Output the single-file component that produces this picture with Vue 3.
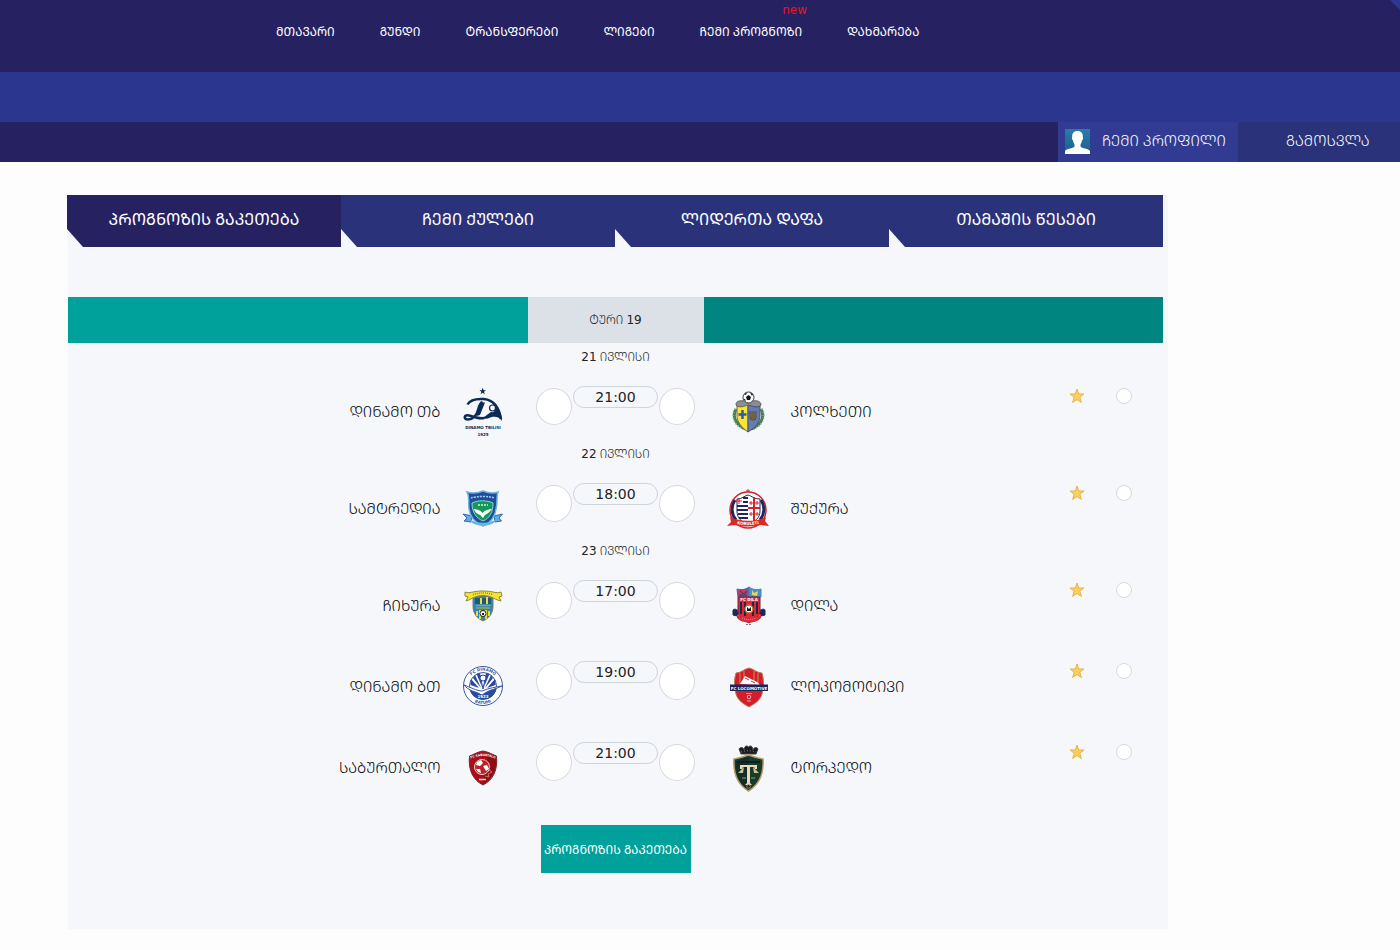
<template>
    <div class="page">
        <header>
            <nav class="main-nav">
                <a v-for="item in menu" :key="item.title" href="#">
                    {{ item.title }}
                    <sup v-if="item.isNew" class="new-badge">new</sup>
                </a>
                <svg class="corner" viewBox="0 0 10 10"><path d="M0 0H10V10Z" fill="#2b3990" /></svg>
            </nav>
            <div class="band"></div>
            <div class="user-bar">
                <a href="#" class="profile">
                    <svg class="avatar" viewBox="0 0 25 25">
                        <defs>
                            <linearGradient id="avatarBg" x1="0" y1="0" x2="0" y2="1">
                                <stop offset="0" stop-color="#2a7bab" />
                                <stop offset="1" stop-color="#1c5f8a" />
                            </linearGradient>
                        </defs>
                        <rect width="25" height="25" fill="url(#avatarBg)" />
                        <path d="M12.5 2C8.500 2 7 4.500 7.200 8C6.600 8.500 7 11 8 11.500C8.300 13.500 9.200 14.500 9.500 15.500V17.500C8 19.500 1.500 19.500 0 22V25H25V22C23.500 19.500 17 19.500 15.500 17.500V15.500C16 14.500 16.700 13.500 17 11.500C18 11 18.400 8.500 17.800 8C18 4.500 16.500 2 12.500 2Z" fill="#fff" />
                    </svg>
                    ჩემი პროფილი
                </a>
                <a href="#" class="logout">გამოსვლა</a>
            </div>
        </header>

        <main class="panel">
            <nav class="tabs">
                <a v-for="(tab, index) in tabs" :key="tab" href="#" :class="{ active: index === activeTab }"
                    @click.prevent="activeTab = index">{{ tab }}</a>
            </nav>

            <form class="games" @submit.prevent>
                <div class="round">
                    <div class="round-home"></div>
                    <div class="round-title">ტური <span class="num">19</span></div>
                    <div class="round-away"></div>
                </div>

                <section v-for="day in days" :key="day.date">
                    <div class="date"><span class="num">{{ day.date }}</span> ივლისი</div>
                    <div v-for="game in day.games" :key="game.home" class="game">
                        <div class="home">
                            <span>{{ game.home }}</span>
                            <!-- Dinamo Tbilisi -->
                            <svg v-if="game.logo === 'dinamo'" class="logo" viewBox="0 0 50 50">
                                <path d="M24.700 1.800L25.600 4.200H28L26 5.700L26.800 8.200L24.700 6.700L22.600 8.200L23.400 5.700L21.400 4.200H23.800Z" fill="#0c2a56" />
                                <path d="M9.500 18.500C12 14 19 12.500 26 13C35 14 41 21 43 33" fill="none" stroke="#0c2a56" stroke-width="2.500" />
                                <path d="M34 17C41 21 43.500 27 44 35C41 30 35 29.500 30 32.500L20 33.500C26 32 30 28 33 26C38 27 39 22 34 17Z" fill="#0c2a56" />
                                <circle cx="34.500" cy="22" r="3" fill="#f5f7fb" stroke="#0c2a56" stroke-width="1.200" />
                                <path d="M24.500 16C22 17 21 20 20 24C19 29 15 33.500 10 33.500C5 33.500 6 28.500 11 29.500C16 30.500 20 33 26 32" fill="none" stroke="#0c2a56" stroke-width="2.500" />
                                <path d="M22 16.500H27L22 29L18.500 30Z" fill="#0c2a56" />
                                <text x="25" y="43" class="crest-text navy">DINAMO TBILISI</text>
                                <text x="25" y="50" class="crest-text navy">1925</text>
                            </svg>
                            <!-- Samtredia -->
                            <svg v-else-if="game.logo === 'samtredia'" class="logo" viewBox="0 0 50 50">
                                <path d="M5 31L14 33L13 39L6 38L9 35ZM44.500 31L36 33L37 39L43.500 38L41 35Z" fill="#65a9e0" stroke="#2b6fb0" stroke-width="1" />
                                <path d="M9 9C15 11 20 10 25 8C30 10 35 11 40 9C38 14 40 18 38 26C37 34 32 40 25 43C18 40 12 34 11 26C10 18 12 14 9 9Z" fill="#1d4e97" stroke="#6fb2e4" stroke-width="1.500" />
                                <path d="M13 15C18 13 32 13 36 15" fill="none" stroke="#a4cdec" stroke-width="1.500" stroke-dasharray="2 1" />
                                <path d="M14 20C20 17 29 17 35 20C35 29 32 35 25 38C18 35 14 29 14 20Z" fill="#16975a" stroke="#8ed3d8" stroke-width="1" />
                                <path d="M15.500 26C19 26 22 27 24.500 30C27 27 31 26 34 26C32 29 29 31 27 32L25 35L22 32C19 31 17 29 15.500 26Z" fill="#fff" />
                                <path d="M20 22H30" stroke="#d4f0df" stroke-width="1.500" stroke-dasharray="2 1" />
                                <path d="M12 36C18 41 32 41 38 36L37 39C31 44 19 44 13 39Z" fill="#67b4e6" />
                            </svg>
                            <!-- Chikhura -->
                            <svg v-else-if="game.logo === 'chikhura'" class="logo" viewBox="0 0 50 50">
                                <path d="M15 16H35V26C35 34 31 38 25 41C19 38 15 34 15 26Z" fill="#2c83c4" stroke="#807f52" stroke-width="1" />
                                <path d="M17 18H33V24H17Z" fill="#23577a" />
                                <path d="M23 18V24M29 17V24" stroke="#f2dc37" stroke-width="2" />
                                <path d="M18 25.500H33M18 28H32" stroke="#96a747" stroke-width="1.500" />
                                <path d="M19 31V36M22 30V39M28 30V39M31 31V36" stroke="#e9d83b" stroke-width="2" />
                                <circle cx="25" cy="33.500" r="3" fill="#fff" stroke="#222" stroke-width="1" />
                                <path d="M24 33H26V35H24Z" fill="#222" />
                                <path d="M7 12C12 14 14 11 25 11S38 14 43 12L44 16L41 17L43 21C38 20 36 18 33 17C28 15 22 15 17 17C14 18 12 20 8 21L10 17L7 16Z" fill="#f6e431" stroke="#8d8738" stroke-width="1" />
                                <path d="M15 14.500C21 12.500 29 12.500 35 14.500" fill="none" stroke="#8b8b42" stroke-width="1.500" stroke-dasharray="1 1" />
                            </svg>
                            <!-- Dinamo Batumi -->
                            <svg v-else-if="game.logo === 'batumi'" class="logo" viewBox="0 0 50 50">
                                <circle cx="25" cy="25" r="19.500" fill="#fff" stroke="#3b56a0" stroke-width="1" />
                                <circle cx="25" cy="25" r="13.500" fill="#fff" stroke="#3b56a0" stroke-width="1" />
                                <path d="M12 29C17 30 21 31 24 33L28 30C31 28 35 27 38.500 26C38 34 32 38.500 25 38.500C18 38.500 13 34 12 29Z" fill="#294a9e" />
                                <path d="M13 18L21 27L12.500 24ZM17 14L23 27L15 17ZM22 12L24 26L18.500 13ZM28 12L26 26L31.500 13ZM33 14L27 27L35 17ZM37 18L29 27L37.500 24Z" fill="#294a9e" />
                                <path d="M22 14L25 28L28 14" fill="none" stroke="#294a9e" stroke-width="1" />
                                <circle cx="25" cy="17" r="3" fill="#fff" stroke="#294a9e" stroke-width="1" />
                                <path d="M6 24C12 26 19 30 24 30C31 27 38 26 44 25C38 28 31 29 27 32L24 34L20 32C15 30 10 29 6 24Z" fill="#fff" stroke="#3b56a0" stroke-width="1" />
                                <path id="batumiTop" d="M10 20A16 16 0 0 1 40 20" fill="none" />
                                <path id="batumiBottom" d="M10 35A18 18 0 0 0 40 35" fill="none" />
                                <text class="crest-text blue"><textPath href="#batumiTop" startOffset="50%">FC DINAMO</textPath></text>
                                <text class="crest-text blue"><textPath href="#batumiBottom" startOffset="50%">BATUMI</textPath></text>
                                <text x="25" y="37" class="crest-text white">1923</text>
                            </svg>
                            <!-- Saburtalo -->
                            <svg v-else class="logo" viewBox="0 0 50 50">
                                <path d="M11.500 14C17 12 19 10 25 9C31 10 33 12 38.500 14C40 28 35 38 25 43C15 38 10 28 11.500 14Z" fill="#a90f18" stroke="#77272b" stroke-width="1" />
                                <path d="M30 11L38 15C39 28 34 37 25 42Z" fill="#7c0b12" opacity=".6" />
                                <path id="saburtaloTop" d="M10 18Q25 10 40 18" fill="none" />
                                <text class="crest-text small white"><textPath href="#saburtaloTop" startOffset="50%">FC SABURTALO</textPath></text>
                                <circle cx="24" cy="25" r="7.500" fill="#b8232a" stroke="#f1d3d3" stroke-width="1" />
                                <path d="M19 20L23 18L25 21L22 24L18 23ZM25 24L29 23L31 27L28 29ZM18 27L22 27L23 31L20 30Z" fill="#fff" />
                                <path d="M26 18C31 19 33 23 31 28L34 30L30 32L31 35L27 34" fill="none" stroke="#dc6d70" stroke-width="1" />
                                <path d="M21 37.500H28" stroke="#f4dada" stroke-width="1.500" />
                            </svg>
                        </div>
                        <div class="score">
                            <input type="text" v-model="game.homeScore" :aria-label="game.home" maxlength="2">
                            <time>{{ game.time }}</time>
                            <input type="text" v-model="game.awayScore" :aria-label="game.away" maxlength="2">
                        </div>
                        <div class="away">
                            <!-- Kolkheti -->
                            <svg v-if="game.logo === 'dinamo'" class="logo" viewBox="0 0 50 50">
                                <path d="M13 23C9 30 12 39 23 43M38 23C42 30 39 39 28 43" fill="none" stroke="#3f7b53" stroke-width="3" />
                                <path d="M12 23C8 30 11 40 22 44M39 23C43 30 40 40 29 44" fill="none" stroke="#8fb39b" stroke-width="2" stroke-dasharray="1 2" />
                                <path d="M13 19C13 14 19 14 25 16C31 14 38 14 38 19L36 21H15Z" fill="#8b8f92" stroke="#5c6164" stroke-width="1" />
                                <path d="M14 20C18 22 21 20 25 19V46C18 41 14 36 14 29Z" fill="#f8e534" stroke="#6b6b3c" stroke-width="1" />
                                <path d="M25 19C29 20 33 22 37 20V29C37 36 33 41 25 46Z" fill="#657bbb" stroke="#4e5265" stroke-width="1" />
                                <path d="M19.500 24V33M15.500 28.500H23.500" stroke="#315aa8" stroke-width="2.500" />
                                <path d="M27 25V31C27 35 33 35 33 31V25M29 25V33M31 25V33" fill="none" stroke="#6a5d31" stroke-width="1.500" />
                                <circle cx="25.500" cy="11.500" r="5.500" fill="#fff" stroke="#333" stroke-width="1" />
                                <path d="M25.500 9L28 11L27 14H24L23 11ZM21 8L24 6.500L23 9ZM27 6.500L30 8L29 10ZM20.500 13L22 13L23 16Z" fill="#111" />
                            </svg>
                            <!-- Shukura -->
                            <svg v-else-if="game.logo === 'samtredia'" class="logo" viewBox="0 0 50 50">
                                <path d="M25 6V10M23 8H27" stroke="#d5232a" stroke-width="1" />
                                <circle cx="25" cy="27" r="18" fill="#fff" stroke="#d5232a" stroke-width="1.500" />
                                <path d="M12 17C8 23 8 31 13 37M38 17C42 23 42 31 37 37" fill="none" stroke="#20265e" stroke-width="3" />
                                <path d="M14 16C19 16 21 13 25 12C29 13 31 16 37 16V28C37 35 32 39 25 41C18 39 14 35 14 28Z" fill="#fff" stroke="#20265e" stroke-width="1" />
                                <path d="M14 23H25M14 27H25M15 31H25M16 35H25M20 15H25M20 19H25" stroke="#20265e" stroke-width="2" />
                                <path d="M31 14V38M25 25H37" stroke="#d5232a" stroke-width="2" />
                                <path d="M28 18V22M26 20H30M34 18V22M32 20H36M28 29V33M26 31H30M34 29V33M32 31H36M16 15V21M13 18H19" stroke="#d5232a" stroke-width="1" />
                                <path d="M7 34C17 39 33 39 43 34L42 38L46 43L38 42C29 44 20 44 12 42L4 43L8 39Z" fill="#dc2923" />
                                <path id="shukuraRibbon" d="M10 40Q25 44 40 40" fill="none" />
                                <text class="crest-text white"><textPath href="#shukuraRibbon" startOffset="50%">KOBULETI</textPath></text>
                            </svg>
                            <!-- Dila -->
                            <svg v-else-if="game.logo === 'chikhura'" class="logo" viewBox="0 0 50 50">
                                <path d="M10 30C12 28 14 30 17 32L14 36L10 35ZM42 30C40 28 37 30 35 32L38 36L42 35Z" fill="#1b2958" stroke="#1b2958" stroke-width="1" />
                                <path d="M14 9C18 10 22 10 26 7V17H15Z" fill="#b54369" stroke="#466097" stroke-width="1" />
                                <path d="M26 7C30 10 34 10 38 9V17H26Z" fill="#4295d5" stroke="#5280b5" stroke-width="1" />
                                <path d="M17 11L21 14L24 11M16 15H24" fill="none" stroke="#65396f" stroke-width="1.500" />
                                <path d="M29 10L31 13L35 11L34 16L29 15Z" fill="#ead652" />
                                <path d="M15 17H37V32C35 38 30 41 26 43C22 41 17 38 15 32Z" fill="#df2835" stroke="#6b2540" stroke-width="1" />
                                <path d="M18 22V34M22 22V36M30 22V36M34 22V34" stroke="#202846" stroke-width="2" />
                                <text x="26" y="21" class="crest-text white">FC DILA</text>
                                <circle cx="26" cy="29" r="4" fill="#fff" stroke="#c56934" stroke-width="1.500" />
                                <path d="M24 27L26 29L28 27V31H24Z" fill="#161616" />
                                <path d="M14 34C20 40 32 40 38 34V38C33 44 19 44 14 38Z" fill="#dc2935" />
                                <path d="M19 38Q26 41 33 38" fill="none" stroke="#f2a2a5" stroke-width="1" stroke-dasharray="1 1" />
                                <path d="M23 44.500H29" stroke="#777" stroke-width="1" stroke-dasharray="2 1" />
                            </svg>
                            <!-- Lokomotivi -->
                            <svg v-else-if="game.logo === 'batumi'" class="logo" viewBox="0 0 50 50">
                                <path d="M13 12C18 12 21 8 26 7C31 8 34 12 39 12C41 19 41 25 39 33C37 40 31 43 26 46C21 43 15 40 13 33C11 25 11 19 13 12Z" fill="#d31d2b" stroke="#bd7a54" stroke-width="1" />
                                <path d="M17 12V23M21 10V20M31 10V20M35 12V23" stroke="#d06a48" stroke-width="1.500" />
                                <path d="M17 23L22 15L34 21L37 24Z" fill="#fff" />
                                <path d="M22 17L26 19M28 20L32 22" stroke="#bb3a43" stroke-width="1" />
                                <path d="M7 23.500H45V30H7Z" fill="#1d245c" />
                                <text x="26" y="28.500" class="crest-text white">FC LOCOMOTIVE</text>
                                <circle cx="26" cy="36" r="1.800" fill="none" stroke="#efb4b8" stroke-width="1" />
                                <path d="M23 32.500H29M24 40H28" stroke="#ec9ca2" stroke-width="1" />
                            </svg>
                            <!-- Torpedo -->
                            <svg v-else class="logo" viewBox="0 0 50 50">
                                <path d="M18 12L16 7C18 4 21 6 21 8C21 4 24 3 25.500 5C27 3 30 4 30 8C31 5 34 5 35 7L33 12Z" fill="#1a1c25" stroke="#4a412f" stroke-width="1" />
                                <path d="M18 10Q25.500 7.500 33 10" fill="none" stroke="#a58a58" stroke-width="1" stroke-dasharray="1 2" />
                                <path d="M11 17C17 16 20 15 25.500 13C31 15 34 16 40 17C41 32 37 42 25.500 49C14 42 10 32 11 17Z" fill="#153d29" stroke="#b99b6c" stroke-width="1.500" />
                                <path d="M25.500 15V48C16 42 13 34 13 19Z" fill="#0d1d28" opacity=".5" />
                                <path d="M14 20H37" stroke="#131b2a" stroke-width="2" />
                                <path d="M17 23H34V27H32L31 25H27V41L29 43H22L24 41V25H20L19 27H17Z" fill="#ead9b4" />
                                <path d="M15 31L21 25L20 31ZM36 31L30 25L31 31Z" fill="#d9bd86" />
                                <path d="M19 36H23M28 36H32" stroke="#8a9f82" stroke-width="1" />
                                <circle cx="25.500" cy="44.500" r="1.800" fill="#1a2127" stroke="#8f8364" stroke-width="1" />
                            </svg>
                            <span>{{ game.away }}</span>
                            <svg class="star" viewBox="0 0 16 16">
                                <path d="M8 1L9.700 6H15L10.800 9.200L12.400 14.500L8 11.500L3.600 14.500L5.200 9.200L1 6H6.300Z" fill="#fccf5c" stroke="#e5b54c" stroke-width="1" />
                            </svg>
                            <input type="radio" name="bonus" v-model="bonus" :value="game.home"
                                :aria-label="game.home + ' - ' + game.away">
                        </div>
                    </div>
                </section>

                <button type="submit" class="submit">პროგნოზის გაკეთება</button>
            </form>
        </main>
    </div>
</template>

<script setup>
import { ref } from 'vue';

const activeTab = ref(0);
const bonus = ref('');

const menu = [
    { title: 'მთავარი' },
    { title: 'გუნდი' },
    { title: 'ტრანსფერები' },
    { title: 'ლიგები' },
    { title: 'ჩემი პროგნოზი', isNew: true },
    { title: 'დახმარება' }
];

const tabs = ['პროგნოზის გაკეთება', 'ჩემი ქულები', 'ლიდერთა დაფა', 'თამაშის წესები'];

const days = ref([
    {
        date: 21,
        games: [{ home: 'დინამო თბ', away: 'კოლხეთი', time: '21:00', logo: 'dinamo', homeScore: '', awayScore: '' }]
    },
    {
        date: 22,
        games: [{ home: 'სამტრედია', away: 'შუქურა', time: '18:00', logo: 'samtredia', homeScore: '', awayScore: '' }]
    },
    {
        date: 23,
        games: [
            { home: 'ჩიხურა', away: 'დილა', time: '17:00', logo: 'chikhura', homeScore: '', awayScore: '' },
            { home: 'დინამო ბთ', away: 'ლოკომოტივი', time: '19:00', logo: 'batumi', homeScore: '', awayScore: '' },
            { home: 'საბურთალო', away: 'ტორპედო', time: '21:00', logo: 'saburtalo', homeScore: '', awayScore: '' }
        ]
    }
]);
</script>

<style>
body {
    background: #fdfdfd;
}
</style>

<style scoped>
.page {
    font-family: 'Noto Sans Georgian', 'DejaVu Sans', sans-serif;
    font-feature-settings: "case";
    font-size: 12px;
    color: #222;
}

.page * {
    box-sizing: border-box;
}

a {
    color: #fff;
    text-decoration: none;
}

.main-nav {
    position: relative;
    display: flex;
    gap: 45px;
    height: 72px;
    padding: 22px 0 0 276px;
    background: #262262;
    line-height: 20px;
}

.main-nav a {
    position: relative;
    white-space: nowrap;
}

.new-badge {
    position: absolute;
    top: -22px;
    right: -5px;
    color: #f01024;
    font-family: 'DejaVu Sans', sans-serif;
    font-size: 12px;
    line-height: 20px;
}

.corner {
    position: absolute;
    top: 0;
    right: 0;
    width: 10px;
    height: 10px;
}

.band {
    height: 50px;
    background: #2b378f;
}

.user-bar {
    display: flex;
    justify-content: flex-end;
    height: 40px;
    background: #262262;
    font-size: 15px;
    font-weight: 350;
    line-height: 37px;
}

.profile {
    display: flex;
    gap: 12px;
    width: 180px;
    padding-left: 7px;
    background: #323b92;
    white-space: nowrap;
}

.avatar {
    width: 25px;
    height: 25px;
    margin-top: 7px;
}

.logout {
    width: 162px;
    padding-left: 48px;
    background: #2a3279;
}

.panel {
    max-width: 1100px;
    margin: 33px 32px 21px 68px;
    padding-bottom: 56px;
    background: #f5f7fb;
}

.tabs {
    display: flex;
    margin: 0 5px 50px -1px;
}

.tabs a {
    position: relative;
    flex: 1;
    height: 52px;
    background: #2a3279;
    font-size: 16px;
    line-height: 48px;
    text-align: center;
}

.tabs a.active {
    background: #262262;
}

/* cut corner */
.tabs a::before {
    content: '';
    position: absolute;
    left: 0;
    bottom: 0;
    width: 16px;
    height: 18px;
    background: #f5f7fb;
    clip-path: polygon(0 0, 100% 100%, 0 100%);
}

.games {
    margin-right: 5px;
}

.round,
.game {
    display: grid;
    grid-template-columns: 1fr 176px 1fr;
}

.round {
    height: 46px;
    line-height: 46px;
    text-align: center;
}

.round-home {
    background: #00a19a;
}

.round-title {
    background: #dce1e8;
}

.round-away {
    background: #008580;
}

.round-title,
.date {
    font-weight: 300;
}

.num {
    font-family: 'DejaVu Sans', sans-serif;
    font-weight: 400;
}

.date {
    height: 16px;
    line-height: 16px;
    text-align: center;
}

section:nth-of-type(1) {
    padding-top: 6px;
}

.game {
    height: 81px;
}

.home,
.away {
    display: flex;
    gap: 17px;
    padding: 21px 20px 0 19px;
    color: #000;
    font-size: 15px;
    font-weight: 300;
    line-height: 50px;
}

.home {
    justify-content: flex-end;
}

.away {
    gap: 18px;
    padding-right: 31px;
}

.logo {
    flex: none;
    width: 50px;
    height: 50px;
}

.crest-text {
    font-family: 'DejaVu Sans', sans-serif;
    font-size: 4px;
    font-weight: bold;
    text-anchor: middle;
}

.small {
    font-size: 3px;
}

.navy {
    fill: #0c2a56;
}

.blue {
    fill: #3b56a0;
}

.white {
    fill: #fff;
}

.score {
    display: flex;
    justify-content: center;
    gap: 1px;
    padding-top: 21px;
}

.score input {
    width: 36px;
    height: 37px;
    margin-top: 2px;
    padding: 0;
    border: 1px solid #d9d9d9;
    border-radius: 50%;
    background: #fff;
    text-align: center;
}

.score time {
    width: 85px;
    height: 22px;
    border: 1px solid #cdd5dd;
    border-radius: 11px;
    font-family: 'DejaVu Sans', sans-serif;
    font-size: 14px;
    line-height: 20px;
    text-align: center;
}

.star {
    flex: none;
    width: 16px;
    height: 16px;
    margin: 2px 13px 0 auto;
}

.away input {
    appearance: none;
    width: 16px;
    height: 16px;
    margin: 2px 0 0;
    border: 1px solid #d9d9d9;
    border-radius: 50%;
    background: #fff;
}

.away input:checked {
    border: 5px solid #00a19a;
}

.submit {
    display: block;
    width: 150px;
    height: 48px;
    margin: 23px auto 0;
    padding: 0;
    border: 0;
    background: #00a19a;
    color: #fff;
    font-family: inherit;
    font-feature-settings: inherit;
    font-size: 12px;
    cursor: pointer;
}
</style>
